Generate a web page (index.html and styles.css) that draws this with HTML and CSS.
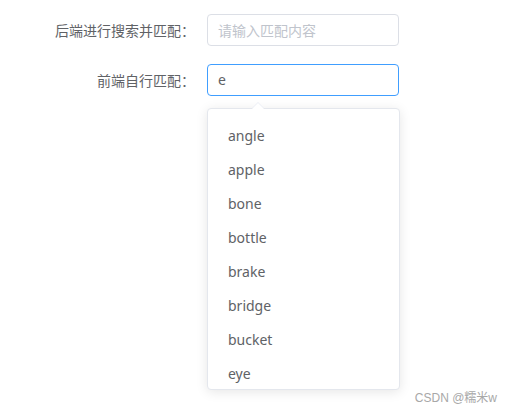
FILE: index.html
```html
<!DOCTYPE html>
<html lang="zh-CN">
<head>
<meta charset="utf-8">
<link rel="stylesheet" href="styles.css">
</head>
<body>
<form class="form">
  <div class="form-item">
    <label class="form-label">后端进行搜索并匹配：</label>
    <div class="form-content">
      <div class="input"><span class="placeholder">请输入匹配内容</span></div>
    </div>
  </div>
  <div class="form-item">
    <label class="form-label">前端自行匹配：</label>
    <div class="form-content">
      <div class="input input-focus"><span class="value">e</span></div>
      <div class="suggest">
        <div class="arrow"></div>
        <ul class="suggest-list">
          <li>angle</li>
          <li>apple</li>
          <li>bone</li>
          <li>bottle</li>
          <li>brake</li>
          <li>bridge</li>
          <li>bucket</li>
          <li>eye</li>
        </ul>
      </div>
    </div>
  </div>
</form>
<div class="watermark">CSDN @糯米w</div>
</body>
</html>
```
FILE: styles.css
```css
html, body {
  margin: 0;
  padding: 0;
  background: #fff;
}
body {
  width: 511px;
  height: 413px;
  position: relative;
  overflow: hidden;
  font-family: "Noto Sans", "Noto Sans CJK SC", sans-serif;
  font-size: 14px;
  color: #606266;
}
.form {
  padding-top: 14px;
  display: flex;
  flex-direction: column;
  gap: 18px;
}
.form-item {
  display: flex;
  align-items: center;
}
.form-label {
  width: 195px;
  padding-right: 12px;
  text-align: right;
  line-height: 32px;
  font-family: "Noto Sans CJK SC", sans-serif;
}
.form-content {
  position: relative;
}
.input {
  box-sizing: border-box;
  width: 192px;
  height: 32px;
  border: 1px solid #dcdfe6;
  border-radius: 4px;
  padding: 0 10px;
  line-height: 30px;
}
.input-focus {
  border-color: #409eff;
}
.placeholder {
  color: #c0c4cc;
  font-family: "Noto Sans CJK SC", sans-serif;
}
.value {
  color: #606266;
}
.suggest {
  position: absolute;
  top: 44px;
  left: 0;
  width: 193px;
  box-sizing: border-box;
  border: 1px solid #e4e7ed;
  border-radius: 4px;
  background: #fff;
  box-shadow: 0 2px 12px rgba(0, 0, 0, 0.1);
}
.arrow {
  position: absolute;
  top: -7px;
  left: 44px;
  width: 0;
  height: 0;
  border-left: 6px solid transparent;
  border-right: 6px solid transparent;
  border-bottom: 6px solid #ebeef5;
}
.arrow::after {
  content: "";
  position: absolute;
  left: -6px;
  top: 1px;
  border-left: 6px solid transparent;
  border-right: 6px solid transparent;
  border-bottom: 6px solid #fff;
}
.suggest-list {
  list-style: none;
  margin: 0;
  padding: 10px 0 0;
  height: 270px;
  overflow: hidden;
}
.suggest-list li {
  padding: 0 20px;
  line-height: 34px;
  height: 34px;
  color: #606266;
}
.watermark {
  position: absolute;
  right: 14px;
  bottom: 8px;
  font-family: "Liberation Sans", "Noto Sans CJK SC", sans-serif;
  font-size: 12px;
  color: #a8a8a8;
}
```
